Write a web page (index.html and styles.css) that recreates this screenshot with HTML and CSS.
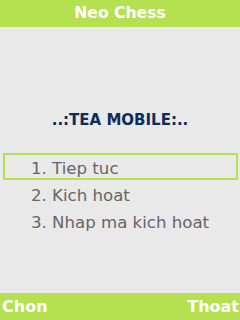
FILE: index.html
```html
<!DOCTYPE html>
<html>
<head>
<meta charset="utf-8">
<link rel="stylesheet" href="styles.css">
</head>
<body>
<div class="screen">
  <div class="titlebar">Neo Chess</div>
  <div class="content">
    <div class="brand">..:TEA MOBILE:..</div>
    <ul class="menu">
      <li class="item selected">1. Tiep tuc</li>
      <li class="item">2. Kich hoat</li>
      <li class="item">3. Nhap ma kich hoat</li>
    </ul>
  </div>
  <div class="softkeys">
    <span class="key">Chon</span>
    <span class="key">Thoat</span>
  </div>
</div>
</body>
</html>
```
FILE: styles.css
```css
html, body {
  margin: 0;
  padding: 0;
}
body {
  width: 240px;
  height: 320px;
  overflow: hidden;
  background: #e9e9e9;
  font-family: "DejaVu Sans", sans-serif;
}
.screen {
  display: flex;
  flex-direction: column;
  height: 320px;
}
.titlebar {
  height: 27px;
  background: #b5e150;
  color: #ffffff;
  font-weight: bold;
  font-size: 15.6px;
  line-height: 27px;
  text-align: center;
}
.content {
  flex: 1;
  display: flex;
  flex-direction: column;
}
.brand {
  margin-top: 83px;
  height: 20px;
  line-height: 20px;
  text-align: center;
  color: #0d2d5d;
  font-weight: bold;
  font-size: 15px;
}
.menu {
  list-style: none;
  margin: 23px 0 0 0;
  padding: 0 2px 0 3px;
}
.item {
  height: 27px;
  line-height: 27px;
  padding-left: 26px;
  color: #666666;
  font-size: 16.6px;
  box-sizing: border-box;
  border: 2px solid transparent;
}
.item.selected {
  border-color: #b5e150;
}
.softkeys {
  height: 27px;
  background: #b5e150;
  display: flex;
  justify-content: space-between;
  align-items: center;
  padding: 0 1px 0 2px;
  color: #ffffff;
  font-weight: bold;
  font-size: 16px;
}
```
